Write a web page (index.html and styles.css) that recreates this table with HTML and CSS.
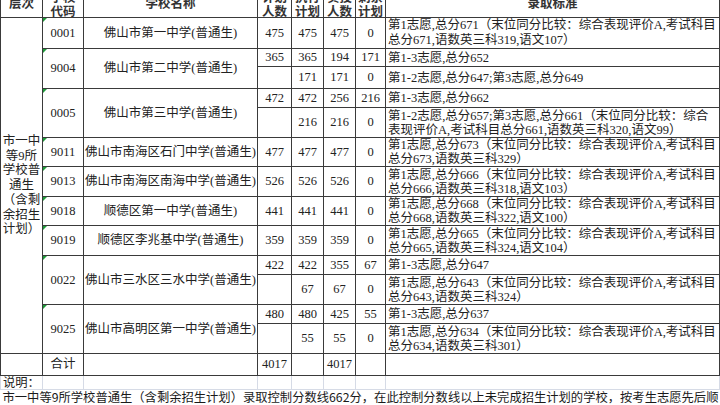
FILE: index.html
```html
<!DOCTYPE html>
<html lang="zh-CN">
<head>
<meta charset="utf-8">
<title>录取标准</title>
<link rel="stylesheet" href="styles.css">
</head>
<body>
<div class="sheet">
<table class="grid">
<colgroup>
<col class="c1"><col class="c2"><col class="c3"><col class="c4"><col class="c5"><col class="c6"><col class="c7"><col class="c8">
</colgroup>
<tr class="head">
<td>层次</td>
<td class="two"><div class="ln">学校</div><div class="ln">代码</div></td>
<td>学校名称</td>
<td class="two"><div class="ln">计划</div><div class="ln">人数</div></td>
<td class="two"><div class="ln">执行</div><div class="ln">计划</div></td>
<td class="two"><div class="ln">实投</div><div class="ln">人数</div></td>
<td class="two"><div class="ln">剩余</div><div class="ln">计划</div></td>
<td>录取标准</td>
</tr>
<tr class="h31">
<td class="level" rowspan="13"><div class="ln">市一中</div><div class="ln">等9所</div><div class="ln">学校普</div><div class="ln">通生</div><div class="ln">（含剩</div><div class="ln">余招生</div><div class="ln">计划）</div></td>
<td class="code">0001</td><td class="name">佛山市第一中学(普通生)</td><td>475</td><td>475</td><td>475</td><td>0</td>
<td class="crit"><div class="ln">第1志愿,总分671（末位同分比较：综合表现评价A,考试科目</div><div class="ln">总分671,语数英三科319,语文107）</div></td>
</tr>
<tr class="h18">
<td class="code" rowspan="2">9004</td><td class="name" rowspan="2">佛山市第二中学(普通生)</td><td>365</td><td>365</td><td>194</td><td>171</td>
<td class="crit"><div class="ln">第1-3志愿,总分652</div></td>
</tr>
<tr class="h22">
<td></td><td>171</td><td>171</td><td>0</td>
<td class="crit"><div class="ln">第1-2志愿,总分647;第3志愿,总分649</div></td>
</tr>
<tr class="h19">
<td class="code" rowspan="2">0005</td><td class="name" rowspan="2">佛山市第三中学(普通生)</td><td>472</td><td>472</td><td>256</td><td>216</td>
<td class="crit"><div class="ln">第1-3志愿,总分662</div></td>
</tr>
<tr class="h30">
<td></td><td>216</td><td>216</td><td>0</td>
<td class="crit"><div class="ln">第1-2志愿,总分657;第3志愿,总分661（末位同分比较：综合</div><div class="ln">表现评价A,考试科目总分661,语数英三科320,语文99）</div></td>
</tr>
<tr class="h29">
<td class="code">9011</td><td class="name">佛山市南海区石门中学(普通生)</td><td>477</td><td>477</td><td>477</td><td>0</td>
<td class="crit"><div class="ln">第1志愿,总分673（末位同分比较：综合表现评价A,考试科目</div><div class="ln">总分673,语数英三科329）</div></td>
</tr>
<tr class="h30">
<td class="code">9013</td><td class="name">佛山市南海区南海中学(普通生)</td><td>526</td><td>526</td><td>526</td><td>0</td>
<td class="crit"><div class="ln">第1志愿,总分666（末位同分比较：综合表现评价A,考试科目</div><div class="ln">总分666,语数英三科318,语文103）</div></td>
</tr>
<tr class="h29">
<td class="code">9018</td><td class="name">顺德区第一中学(普通生)</td><td>441</td><td>441</td><td>441</td><td>0</td>
<td class="crit"><div class="ln">第1志愿,总分668（末位同分比较：综合表现评价A,考试科目</div><div class="ln">总分668,语数英三科322,语文100）</div></td>
</tr>
<tr class="h30">
<td class="code">9019</td><td class="name">顺德区李兆基中学(普通生)</td><td>359</td><td>359</td><td>359</td><td>0</td>
<td class="crit"><div class="ln">第1志愿,总分665（末位同分比较：综合表现评价A,考试科目</div><div class="ln">总分665,语数英三科324,语文104）</div></td>
</tr>
<tr class="h19">
<td class="code" rowspan="2">0022</td><td class="name" rowspan="2">佛山市三水区三水中学(普通生)</td><td>422</td><td>422</td><td>355</td><td>67</td>
<td class="crit"><div class="ln">第1-3志愿,总分647</div></td>
</tr>
<tr class="h30">
<td></td><td>67</td><td>67</td><td>0</td>
<td class="crit"><div class="ln">第1志愿,总分643（末位同分比较：综合表现评价A,考试科目</div><div class="ln">总分643,语数英三科324）</div></td>
</tr>
<tr class="h19">
<td class="code" rowspan="2">9025</td><td class="name" rowspan="2">佛山市高明区第一中学(普通生)</td><td>480</td><td>480</td><td>425</td><td>55</td>
<td class="crit"><div class="ln">第1-3志愿,总分637</div></td>
</tr>
<tr class="h30">
<td></td><td>55</td><td>55</td><td>0</td>
<td class="crit"><div class="ln">第1志愿,总分634（末位同分比较：综合表现评价A,考试科目</div><div class="ln">总分634,语数英三科301）</div></td>
</tr>
<tr class="h22">
<td></td><td class="label">合计</td><td></td><td>4017</td><td></td><td>4017</td><td></td><td></td>
</tr>
<tr class="note h14">
<td class="notelabel"><div class="ln">说明：</div></td><td></td><td></td><td></td><td></td><td></td><td></td><td></td>
</tr>
<tr class="notetext h15">
<td colspan="8"><div class="ln">市一中等9所学校普通生（含剩余招生计划）录取控制分数线662分，在此控制分数线以上未完成招生计划的学校，按考生志愿先后顺</div></td>
</tr>
<tr class="notetext h15">
<td colspan="8"><div class="ln">序，按照分数优先的原则从高分到低分依次录取，直至完成学校招生计划。</div></td>
</tr>
</table>
</div>
</body>
</html>
```

FILE: styles.css
```css
html, body {
  margin: 0;
  padding: 0;
  background: #ffffff;
}
body {
  width: 720px;
  height: 405px;
  overflow: hidden;
}
.sheet {
  margin-top: -12px;
}
.grid {
  border-collapse: collapse;
  table-layout: fixed;
  width: 719px;
  font-family: "Liberation Serif", "Noto Sans CJK SC", serif;
  font-size: 12.5px;
  line-height: 13px;
  color: #222222;
}
.c1 { width: 42px; }
.c2 { width: 41px; }
.c3 { width: 174px; }
.c4 { width: 34px; }
.c5 { width: 32px; }
.c6 { width: 32px; }
.c7 { width: 30px; }
.c8 { width: 334px; }
.grid td {
  border: 1px solid #3a3a3a;
  padding: 0 1px;
  text-align: center;
  vertical-align: middle;
  white-space: nowrap;
  overflow: hidden;
}
.ln {
  height: 13px;
  line-height: 13px;
  white-space: nowrap;
}
.head { height: 29px; }
.head td {
  font-weight: bold;
  color: #333333;
  padding-top: 2px;
}
.head td.two {
  vertical-align: bottom;
  padding-top: 0;
}
.head .ln {
  height: 14px;
  line-height: 14px;
}
.head .two .ln:last-child {
  margin-bottom: -2px;
}
.h14 { height: 14px; }
.h15 { height: 15px; }
.h17 { height: 17px; }
.h18 { height: 18px; }
.h19 { height: 19px; }
.h20 { height: 20px; }
.h22 { height: 22px; }
.h29 { height: 29px; }
.h30 { height: 30px; }
.h31 { height: 31px; }
.grid td.level {
  padding: 0;
}
.level .ln {
  height: 14.7px;
  line-height: 14.7px;
}
.grid td.code {
  position: relative;
}
.grid td.code::before {
  content: "";
  position: absolute;
  left: 0;
  top: 0;
  border-top: 4px solid #1f9a3a;
  border-right: 4px solid transparent;
}
.crit .ln {
  height: 14px;
  line-height: 14px;
}
.h31 .crit .ln {
  height: 15px;
  line-height: 15px;
}
.grid td.crit {
  text-align: left;
  padding-left: 2px;
}
.note td {
  border-color: #d6dbe6;
}
.grid td.notelabel {
  text-align: left;
  padding-left: 2px;
  font-family: "Noto Sans CJK SC", sans-serif;
  font-size: 12.3px;
  vertical-align: top;
}
.notelabel .ln {
  height: 12px;
  line-height: 12px;
}
.notetext td {
  border: none;
  text-align: left;
  padding-left: 2px;
  font-family: "Noto Sans CJK SC", sans-serif;
  font-size: 12.3px;
  color: #1a1a1a;
}
.notetext .ln {
  height: 14px;
  line-height: 14px;
}
```
